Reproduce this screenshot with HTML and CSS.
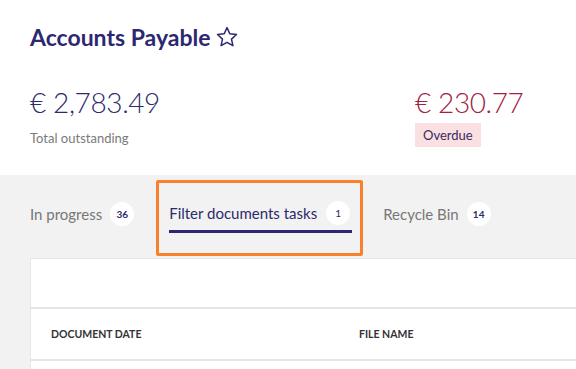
FILE: index.html
```html
<!DOCTYPE html>
<html lang="en">
<head>
  <meta charset="UTF-8">
  <title>Accounts Payable</title>
  <link rel="stylesheet" href="styles.css">
</head>
<body>
  <!-- Page header with totals -->
  <header class="page-head">
    <h1 class="title">Accounts Payable
      <svg class="star" viewBox="0 0 24 24" width="24" height="24">
        <path d="M12 2.6l2.8 6.2 6.7.7-5 4.6 1.4 6.6L12 17.3l-5.9 3.4 1.4-6.6-5-4.6 6.7-.7z" fill="none" stroke="currentColor" stroke-width="1.5" stroke-linejoin="round"/>
      </svg>
    </h1>
    <div class="totals">
      <div class="total">
        <div class="amount">€ 2,783.49</div>
        <div class="caption">Total outstanding</div>
      </div>
      <div class="total">
        <div class="amount overdue">€ 230.77</div>
        <span class="badge-overdue">Overdue</span>
      </div>
    </div>
  </header>

  <!-- Tabs and document table -->
  <main class="content">
    <nav class="tabs">
      <div class="tab">
        <span class="tab-label">In progress</span>
        <span class="count">36</span>
      </div>
      <div class="tab-highlight">
        <div class="tab active">
          <span class="tab-label">Filter documents tasks</span>
          <span class="count">1</span>
        </div>
      </div>
      <div class="tab">
        <span class="tab-label">Recycle Bin</span>
        <span class="count">14</span>
      </div>
    </nav>

    <section class="card">
      <div class="card-toolbar"></div>
      <div class="table-head">
        <div class="col col-date">Document date</div>
        <div class="col col-name">File name</div>
      </div>
      <div class="table-body"></div>
    </section>
  </main>
</body>
</html>
```

FILE: styles.css
```css
body {
  margin: 0;
  font-family: 'Lato', 'Noto Sans', sans-serif;
  color: #2c2a6b;
  background: #fff;
  overflow: hidden;
}

/* Header */
.page-head {
  padding: 22px 30px 28px;
}
.title {
  margin: 0;
  font-size: 23px;
  font-weight: 700;
  color: #2c2770;
  display: flex;
  align-items: center;
  gap: 5px;
  height: 30px;
}
.star { color: #2c2770; }

.totals {
  display: flex;
  margin-top: 33px;
}
.total { width: 385px; flex-shrink: 0; }
.total + .total { width: auto; flex: 1; }
.amount {
  font-size: 28px;
  font-weight: 300;
  letter-spacing: -0.4px;
  line-height: 34px;
  color: #2c2a6b;
}
.amount.overdue { color: #a3203f; }
.caption {
  margin-top: 11px;
  font-size: 13px;
  color: #7a7a7a;
}
.badge-overdue {
  display: inline-block;
  margin-top: 4px;
  background: #fadfe3;
  color: #3a2a5a;
  font-size: 13px;
  line-height: 24px;
  padding: 0 8px;
}

/* Grey content area */
.content {
  background: #f2f2f2;
  padding: 5px 0 0 30px;
  height: 200px;
}
.tabs {
  display: flex;
  align-items: flex-start;
}
.tab {
  display: flex;
  align-items: center;
  gap: 8px;
  height: 38px;
  margin-top: 15px;
  color: #777;
  font-size: 15px;
}
.tab-highlight {
  border: 3px solid #f7812d;
  border-radius: 2px;
  padding: 12px 8px 20px 10px;
  margin: 0 20px 0 22px;
}
.tab-highlight .tab { margin-top: 0; }
.tab.active {
  color: #2c2a6b;
  border-bottom: 3px solid #2c2770;
  height: 35px;
  padding-right: 2px;
  gap: 9px;
}
.count {
  width: 24px;
  height: 24px;
  border-radius: 50%;
  background: #fff;
  color: #2c2a6b;
  font-size: 10px;
  font-weight: 700;
  display: flex;
  align-items: center;
  justify-content: center;
}
.tab.active .count { font-weight: 400; }

/* Card */
.card {
  margin-top: 2px;
  background: #fff;
  border: 1px solid #e6e6e6;
  border-right: 0;
}
.card-toolbar {
  height: 48px;
  border-bottom: 2px solid #e5e5e5;
}
.table-head {
  display: flex;
  align-items: center;
  height: 50px;
  border-bottom: 2px solid #e5e5e5;
  font-size: 10.5px;
  font-weight: 700;
  text-transform: uppercase;
  color: #333;
}
.col-date { width: 308px; padding-left: 20px; }
.table-body { height: 40px; }
```
